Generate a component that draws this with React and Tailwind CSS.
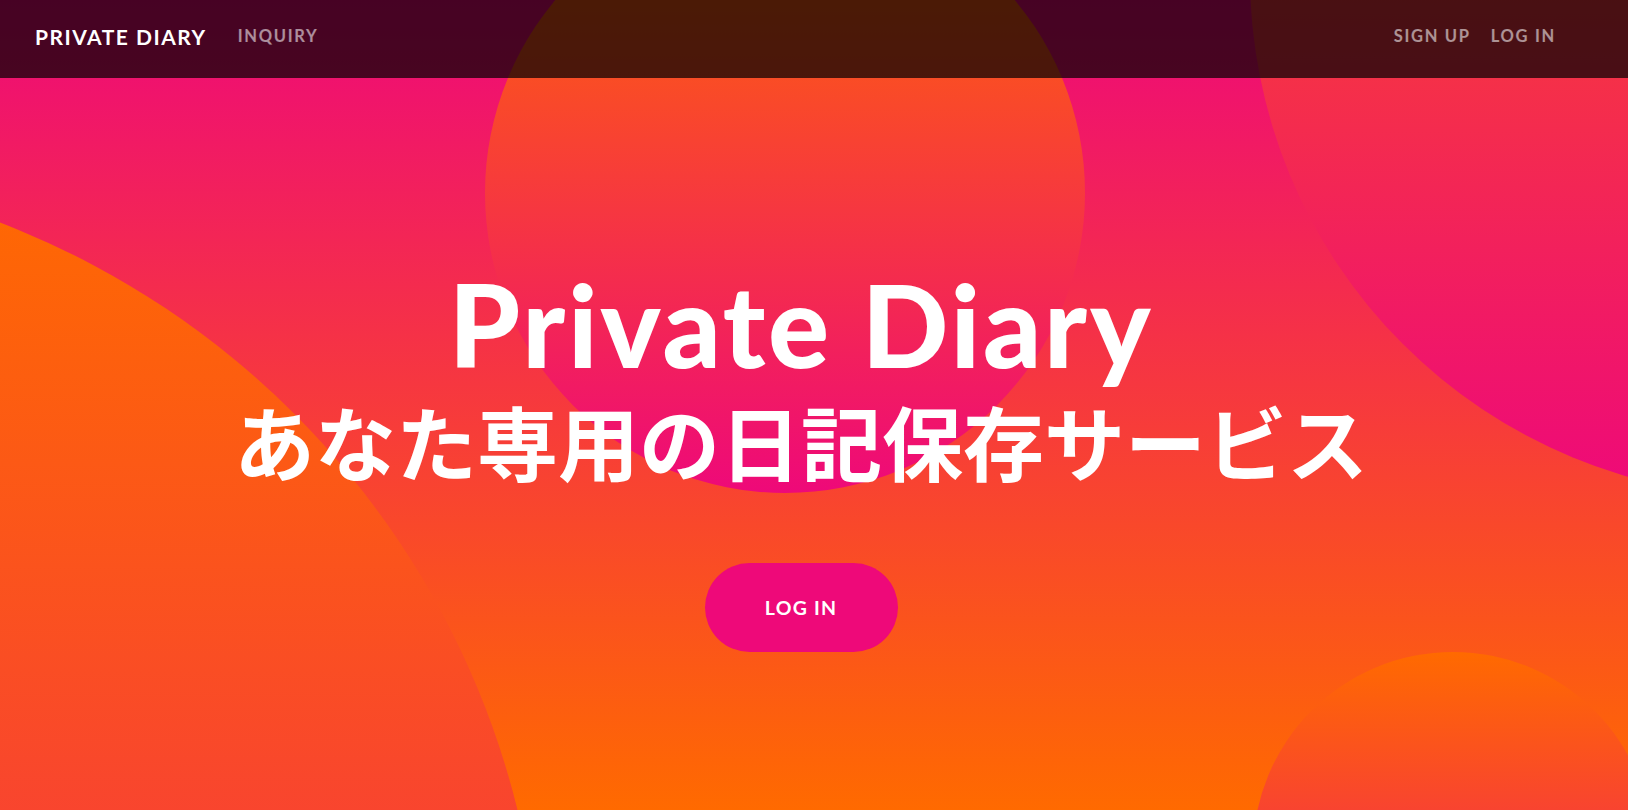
import React from 'react';

const circleBg = 'absolute rounded-full bg-[linear-gradient(0deg,#ee0979_0%,#ff6a00_100%)]';

const Navbar = () => {
    return (
        <nav className="absolute top-0 inset-x-0 z-20 h-[78px] bg-black/70 flex items-center justify-between pl-[35px] pr-[72px] pb-[5px] font-['Lato',sans-serif] font-bold uppercase">
            <div className="flex items-center gap-[31px]">
                <a href="#" className="text-white text-[21px] tracking-[1.5px]">Private Diary</a>
                <a href="#" className="text-white/55 text-[16.5px] tracking-[1.7px]">Inquiry</a>
            </div>
            <div className="flex items-center gap-[20px] text-white/55 text-[16.5px] tracking-[1.7px]">
                <a href="#">Sign Up</a>
                <a href="#">Log In</a>
            </div>
        </nav>
    );
};

export default function App() {
    return (
        <div className="relative h-[810px] w-full overflow-hidden bg-[linear-gradient(180deg,#ee0979_0%,#ff6a00_100%)]">
            {/* Background circles */}
            <div className={`${circleBg} left-[-1150px] top-[166px] w-[1692px] h-[1692px]`} />
            <div className={`${circleBg} left-[485px] top-[-107px] w-[600px] h-[600px]`} />
            <div className={`${circleBg} left-[1250px] top-[-547px] w-[1044px] h-[1044px]`} />
            <div className={`${circleBg} left-[1253px] top-[652px] w-[400px] h-[400px]`} />

            <Navbar />

            {/* Masthead */}
            <main className="relative z-10 flex flex-col items-center pt-[267px] pr-[26px] text-white text-center">
                <h1 className="font-['Lato',sans-serif] font-black text-[114px] leading-none tracking-[2.8px]">
                    Private Diary
                </h1>
                <h2 className="mt-[18px] font-['Noto_Sans_CJK_JP',sans-serif] font-bold text-[81px] leading-none">
                    あなた専用の日記保存サービス
                </h2>
                <a
                    href="#"
                    className="mt-[83px] w-[193px] h-[89px] flex items-center justify-center rounded-full bg-[#ee0979] font-['Lato',sans-serif] font-bold uppercase text-[19.5px] tracking-[1.2px]"
                >
                    Log In
                </a>
            </main>
        </div>
    );
}
